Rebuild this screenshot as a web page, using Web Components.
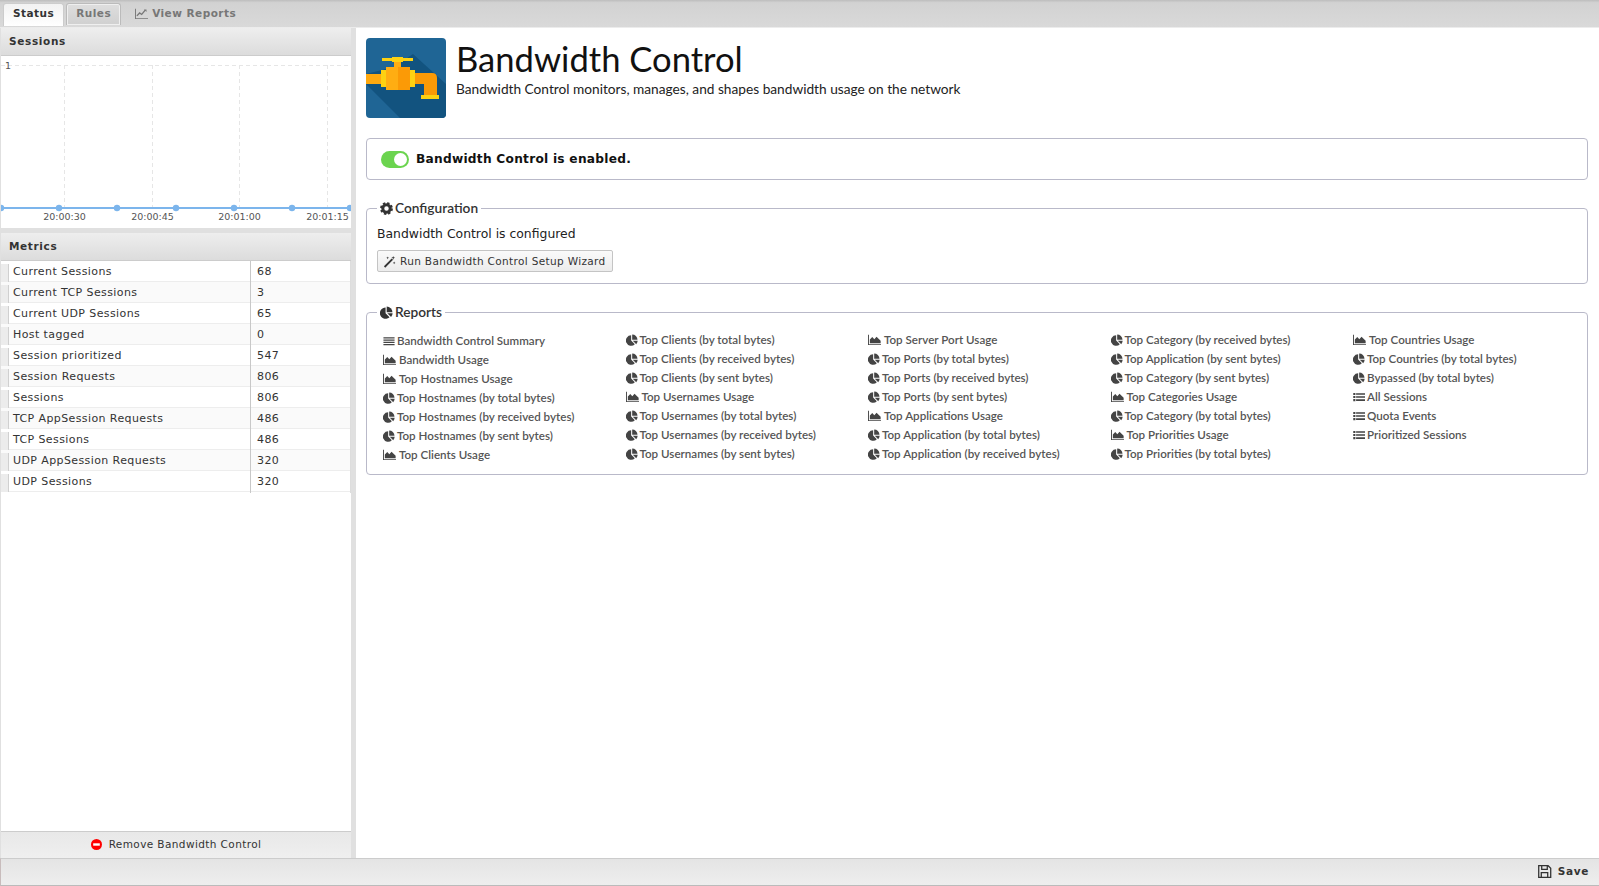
<!DOCTYPE html>
<html>
<head>
<meta charset="utf-8">
<title>Bandwidth Control</title>
<style>
  html, body { margin: 0; height: 100%; overflow: hidden; background: #e0e0e0; }
</style>
</head>
<body>
<bw-app></bw-app>
<script>
const ICONS = {
  pie: '<path d="M6 1.6A6.1 6.1 0 1 0 10.3 12L6 7.7Z"/><path d="M7.2 .6A6.2 6.2 0 0 1 13.4 6.6H7.2Z"/><path d="M7.9 7.9H13.6A6.1 6.1 0 0 1 11.9 11.9Z"/>',
  area: '<path d="M0 2H1V12H14V13H0Z"/><path d="M2 11V7L4.6 4.4 6.8 6.8 9.2 4 13.6 8.4V11Z"/>',
  line: '<path d="M0 2H1V12H14V13H0Z"/><path d="M2 9.6 5 6.4 7.2 8 11 3.4" fill="none" stroke="currentColor" stroke-width="1.4"/><path d="M9.6 2.6H12.4V5.4Z"/>',
  justify: '<path d="M.5 2.5H13.5V4H.5ZM.5 5.2H13.5V6.7H.5ZM.5 7.9H13.5V9.4H.5ZM.5 10.6H13.5V12.1H.5Z" />',
  list: '<path d="M.3 2.2H2.8V4.7H.3ZM3.6 2.5H14V4.4H3.6ZM.3 5.8H2.8V8.3H.3ZM3.6 6.1H14V8H3.6ZM.3 9.4H2.8V11.9H.3ZM3.6 9.7H14V11.6H3.6Z"/>',
  cog: '<circle cx="7" cy="7" r="4" fill="none" stroke="currentColor" stroke-width="3.2"/><circle cx="7" cy="7" r="5.9" fill="none" stroke="currentColor" stroke-width="2" stroke-dasharray="2.6 2.03"/>',
  magic: '<path d="M1 12.2 9.4 3.8 10.8 5.2 2.4 13.6Z"/><path d="M11 1 11.5 2.5 13 3 11.5 3.5 11 5 10.5 3.5 9 3 10.5 2.5ZM5 1.5 5.4 2.6 6.5 3 5.4 3.4 5 4.5 4.6 3.4 3.5 3 4.6 2.6ZM12 7 12.4 8.1 13.5 8.5 12.4 8.9 12 10 11.6 8.9 10.5 8.5 11.6 8.1Z"/>',
  save: '<path fill-rule="evenodd" d="M1 1H10.6L13.4 3.8V13H1ZM2.2 2.2V11.8H3.4V7.4H10.6V11.8H12.2V4.3L10.2 2.3V5.6H3.8V2.2ZM4.6 8.6V11.8H9.4V8.6ZM5 2.2V4.4H9V2.2Z"/>'
};

class BwIcon extends HTMLElement {
  connectedCallback() {
    const size = this.getAttribute('size') || 14;
    this.attachShadow({ mode: 'open' }).innerHTML = `
      <style>
        :host { display: inline-flex; flex: none; }
        svg { display: block; fill: currentColor; }
      </style>
      <svg width="${size}" height="${size}" viewBox="0 0 14 14">${ICONS[this.getAttribute('name')]}</svg>`;
  }
}
customElements.define('bw-icon', BwIcon);

class BwTab extends HTMLElement {
  connectedCallback() {
    this.attachShadow({ mode: 'open' }).innerHTML = `
      <style>
        :host {
          display: flex; align-items: center; gap: 4px; box-sizing: border-box;
          height: 22px; padding: 0 9px 3px; margin-right: 2px; white-space: nowrap;
          font: bold 10.5px "DejaVu Sans", sans-serif; letter-spacing: .47px; color: #777;
          border: 1px solid #bbb; border-bottom: 0; border-radius: 3px 3px 0 0;
          background: linear-gradient(#dedede, #d0d0d0);
          box-shadow: inset 0 0 0 1px #efefef;
        }
        :host([active]) {
          color: #333; background: linear-gradient(#f2f2f2, #fff);
          height: 23px; margin-bottom: -1px; padding-bottom: 4px; box-shadow: none; border-color: #ccc;
        }
        :host([plain]) { border-color: transparent; background: none; box-shadow: none; padding-left: 11px; }
      </style>
      <slot></slot>`;
  }
}
customElements.define('bw-tab', BwTab);

class BwTabbar extends HTMLElement {
  connectedCallback() {
    this.attachShadow({ mode: 'open' }).innerHTML = `
      <style>
        :host {
          display: flex; align-items: flex-end; box-sizing: border-box; height: 28px;
          padding: 3px 0 2px 3px; flex: none;
          background: linear-gradient(#bdbdbd, #d2d2d2 10%, #d9d9d9);
          border-bottom: 1px solid #ececec;
        }
      </style>
      <slot></slot>`;
  }
}
customElements.define('bw-tabbar', BwTabbar);

class BwPanel extends HTMLElement {
  connectedCallback() {
    this.attachShadow({ mode: 'open' }).innerHTML = `
      <style>
        :host { display: block; background: #fff; flex: none; }
        header {
          box-sizing: border-box; height: 28px; padding: 0 8px 2px; display: flex; align-items: center;
          font: bold 10.5px "DejaVu Sans", sans-serif; letter-spacing: .65px; color: #333;
          background: linear-gradient(#eeeeee, #dcdcdc); border-bottom: 1px solid #ccc;
        }
      </style>
      <header>${this.getAttribute('heading')}</header>
      <slot></slot>`;
  }
}
customElements.define('bw-panel', BwPanel);

class BwChart extends HTMLElement {
  connectedCallback() {
    const xs = [63.5, 151.5, 238.5, 326.5];
    const labels = ['20:00:30', '20:00:45', '20:01:00', '20:01:15'];
    const dots = [0, 58, 116, 175, 233, 291, 349];
    this.attachShadow({ mode: 'open' }).innerHTML = `
      <style>
        :host { display: block; height: 172px; }
        svg { display: block; }
        text { font: 9.5px "DejaVu Sans", sans-serif; fill: #555; }
      </style>
      <svg width="350" height="172">
        <path d="M0 9.5H350" stroke="#e6e6e6" stroke-dasharray="4 3"/>
        ${xs.map(x => `<path d="M${x} 9V152" stroke="#e6e6e6" stroke-dasharray="4 3"/>`).join('')}
        <text x="4" y="13">1</text>
        <path d="M0 152H350" stroke="#7cb5ec" stroke-width="2"/>
        ${dots.map(x => `<circle cx="${x}" cy="152" r="3.2" fill="#7cb5ec"/>`).join('')}
        ${labels.map((t, i) => `<text x="${xs[i]}" y="164" text-anchor="middle">${t}</text>`).join('')}
      </svg>`;
  }
}
customElements.define('bw-chart', BwChart);

class BwMetrics extends HTMLElement {
  connectedCallback() {
    const rows = [
      ['Current Sessions', 68], ['Current TCP Sessions', 3], ['Current UDP Sessions', 65],
      ['Host tagged', 0], ['Session prioritized', 547], ['Session Requests', 806],
      ['Sessions', 806], ['TCP AppSession Requests', 486], ['TCP Sessions', 486],
      ['UDP AppSession Requests', 320], ['UDP Sessions', 320]
    ];
    this.attachShadow({ mode: 'open' }).innerHTML = `
      <style>
        :host { display: block; font: 11px "DejaVu Sans", sans-serif; letter-spacing: .4px; color: #333; }
        .row {
          display: grid; grid-template-columns: 8px 242px 1fr; height: 21px; box-sizing: border-box;
          border-bottom: 1px solid #ededed; align-items: stretch;
        }
        .row:nth-of-type(even) { background: #fafafa; }
        .num { background: #ececec; border-right: 1px solid #d0d0d0; margin: 3px 0 1px; }
        .name { padding-left: 4px; line-height: 22px; border-right: 1px solid #c8c8c8; }
        .val { padding-left: 6px; line-height: 22px; border-right: 1px solid #ddd; }
      </style>
      ${rows.map(r => `<div class="row"><div class="num"></div><div class="name">${r[0]}</div><div class="val">${r[1]}</div></div>`).join('')}`;
  }
}
customElements.define('bw-metrics', BwMetrics);

class BwFieldset extends HTMLElement {
  connectedCallback() {
    this.attachShadow({ mode: 'open' }).innerHTML = `
      <style>
        :host { display: block; }
        fieldset {
          margin: 0; padding: 9px 10px 0; border: 1px solid #b9b9c9; border-radius: 4px; min-width: 0;
          box-sizing: border-box; height: var(--h);
        }
        legend {
          display: flex; align-items: center; gap: 2px; padding: 0 3px; margin-left: 0;
          font: 600 13.7px/16px Lato, sans-serif; color: #333; height: 16px;
        }
      </style>
      <fieldset>
        <legend><bw-icon name="${this.getAttribute('icon')}" size="13"></bw-icon>${this.getAttribute('legend')}</legend>
        <slot></slot>
      </fieldset>`;
  }
}
customElements.define('bw-fieldset', BwFieldset);

class BwReport extends HTMLElement {
  connectedCallback() {
    const icon = this.getAttribute('icon');
    const area = icon === 'area';
    this.attachShadow({ mode: 'open' }).innerHTML = `
      <style>
        :host {
          display: flex; align-items: center; height: 19px; white-space: nowrap;
          font: 600 11.6px Lato, sans-serif; color: #555;
        }
        bw-icon { margin-right: ${area ? 3 : 2}px; color: #444; }
      </style>
      <bw-icon name="${icon}" size="${area ? 13 : 12}"></bw-icon><slot></slot>`;
  }
}
customElements.define('bw-report', BwReport);

class BwReports extends HTMLElement {
  connectedCallback() {
    const cols = [
      [['justify', 'Bandwidth Control Summary'], ['area', 'Bandwidth Usage'], ['area', 'Top Hostnames Usage'], ['pie', 'Top Hostnames (by total bytes)'], ['pie', 'Top Hostnames (by received bytes)'], ['pie', 'Top Hostnames (by sent bytes)'], ['area', 'Top Clients Usage']],
      [['pie', 'Top Clients (by total bytes)'], ['pie', 'Top Clients (by received bytes)'], ['pie', 'Top Clients (by sent bytes)'], ['area', 'Top Usernames Usage'], ['pie', 'Top Usernames (by total bytes)'], ['pie', 'Top Usernames (by received bytes)'], ['pie', 'Top Usernames (by sent bytes)']],
      [['area', 'Top Server Port Usage'], ['pie', 'Top Ports (by total bytes)'], ['pie', 'Top Ports (by received bytes)'], ['pie', 'Top Ports (by sent bytes)'], ['area', 'Top Applications Usage'], ['pie', 'Top Application (by total bytes)'], ['pie', 'Top Application (by received bytes)']],
      [['pie', 'Top Category (by received bytes)'], ['pie', 'Top Application (by sent bytes)'], ['pie', 'Top Category (by sent bytes)'], ['area', 'Top Categories Usage'], ['pie', 'Top Category (by total bytes)'], ['area', 'Top Priorities Usage'], ['pie', 'Top Priorities (by total bytes)']],
      [['area', 'Top Countries Usage'], ['pie', 'Top Countries (by total bytes)'], ['pie', 'Bypassed (by total bytes)'], ['list', 'All Sessions'], ['list', 'Quota Events'], ['list', 'Prioritized Sessions']]
    ];
    this.attachShadow({ mode: 'open' }).innerHTML = `
      <style>
        :host { display: grid; grid-template-columns: repeat(5, 242.5px); padding: 1px 0 0 6px; }
        div:first-of-type { padding-top: 1px; }
      </style>
      ${cols.map(c => `<div>${c.map(r => `<bw-report icon="${r[0]}">${r[1]}</bw-report>`).join('')}</div>`).join('')}`;
  }
}
customElements.define('bw-reports', BwReports);

class BwAppIcon extends HTMLElement {
  connectedCallback() {
    this.attachShadow({ mode: 'open' }).innerHTML = `
      <style>
        :host { display: block; width: 80px; height: 80px; flex: none; }
        svg { display: block; border-radius: 4px; }
      </style>
      <svg width="80" height="80" viewBox="0 0 80 80" shape-rendering="crispEdges">
        <rect width="80" height="80" fill="#1f6595"/>
        <path d="M0 46 34 80H80V46L47 16 28 29 0 36Z" fill="#12537f" shape-rendering="auto"/>
        <path d="M0 36H15V46H0Z" fill="#ffa90f"/>
        <path d="M49 35H66Q71 35 71 40V57H58V46H49Z" fill="#fb9a06" shape-rendering="auto"/>
        <path d="M55 57H73V61H55Z" fill="#fdd112"/>
        <path d="M15 32H20V49H15ZM44 32H49V49H44Z" fill="#fdd112"/>
        <path d="M20 29H32V52H20Z" fill="#ffad12"/>
        <path d="M32 29H44V52H32Z" fill="#fb9a06"/>
        <path d="M28 23H35V29H28Z" fill="#ffad12"/>
        <path d="M16 20H47V23H16ZM26 19H37V24H26Z" fill="#fdd112"/>
      </svg>`;
  }
}
customElements.define('bw-app-icon', BwAppIcon);

class BwToggle extends HTMLElement {
  connectedCallback() {
    this.attachShadow({ mode: 'open' }).innerHTML = `
      <style>
        :host { display: block; width: 28px; height: 17px; border-radius: 9px; background: #6bd44f; position: relative; flex: none; }
        i { position: absolute; right: 2px; top: 2px; width: 13px; height: 13px; border-radius: 50%; background: #fff; }
      </style>
      <i></i>`;
  }
}
customElements.define('bw-toggle', BwToggle);

class BwButton extends HTMLElement {
  connectedCallback() {
    this.attachShadow({ mode: 'open' }).innerHTML = `
      <style>
        :host {
          display: inline-flex; align-items: center; gap: 4px; box-sizing: border-box; height: 22px; padding: 0 6px 0 5px;
          border: 1px solid #c4c4c4; border-radius: 2px; background: linear-gradient(#fafafa, #ececec);
          font: 10.5px "DejaVu Sans", sans-serif; letter-spacing: .35px; color: #333; white-space: nowrap;
        }
      </style>
      <slot></slot>`;
  }
}
customElements.define('bw-button', BwButton);

class BwMain extends HTMLElement {
  connectedCallback() {
    this.attachShadow({ mode: 'open' }).innerHTML = `
      <style>
        :host { display: block; flex: 1; min-width: 0; background: #fff; padding: 10px 11px 0 10px; box-sizing: border-box; }
        .head { display: flex; gap: 10px; height: 80px; }
        h1 { margin: 1px 0 0; font: 400 34.6px/40px Lato, sans-serif; color: #111; }
        .sub { font: 13.7px/18px Lato, sans-serif; color: #222; margin-top: 1px; }
        .status {
          display: flex; align-items: center; gap: 7px; height: 42px; box-sizing: border-box; margin: 20px 0 0;
          padding-left: 14px; border: 1px solid #b9b9c9; border-radius: 4px;
          font: bold 12.2px "DejaVu Sans", sans-serif; letter-spacing: .25px; color: #111;
        }
        .cfg { margin-top: 20px; --h: 84px; }
        .rep { margin-top: 20px; --h: 171px; }
        .txt { font: 12.4px/18px "DejaVu Sans", sans-serif; color: #222; margin-bottom: 7px; }
      </style>
      <div class="head">
        <bw-app-icon></bw-app-icon>
        <div>
          <h1>Bandwidth Control</h1>
          <div class="sub">Bandwidth Control monitors, manages, and shapes bandwidth usage on the network</div>
        </div>
      </div>
      <div class="status"><bw-toggle></bw-toggle>Bandwidth Control is enabled.</div>
      <bw-fieldset class="cfg" icon="cog" legend="Configuration">
        <div class="txt">Bandwidth Control is configured</div>
        <bw-button><bw-icon name="magic" size="13"></bw-icon>Run Bandwidth Control Setup Wizard</bw-button>
      </bw-fieldset>
      <bw-fieldset class="rep" icon="pie" legend="Reports">
        <bw-reports></bw-reports>
      </bw-fieldset>`;
  }
}
customElements.define('bw-main', BwMain);

class BwSide extends HTMLElement {
  connectedCallback() {
    this.attachShadow({ mode: 'open' }).innerHTML = `
      <style>
        :host { display: flex; flex-direction: column; width: 350px; flex: none; margin-left: 1px; background: #fff; }
        .gap { height: 5px; background: #e0e0e0; flex: none; }
        .fill { flex: 1; }
        .remove {
          flex: none; height: 27px; box-sizing: border-box; display: flex; align-items: center; justify-content: center; gap: 7px;
          padding-bottom: 2px;
          font: 10.5px "DejaVu Sans", sans-serif; letter-spacing: .4px; color: #333;
          background: linear-gradient(#e8e8e8, #efefef); border-top: 1px solid #ccc;
        }
        svg { display: block; }
      </style>
      <bw-panel heading="Sessions"><bw-chart></bw-chart></bw-panel>
      <div class="gap"></div>
      <bw-panel heading="Metrics"><bw-metrics></bw-metrics></bw-panel>
      <div class="fill"></div>
      <div class="remove">
        <svg width="11" height="11" viewBox="0 0 11 11"><circle cx="5.5" cy="5.5" r="5.5" fill="#f00"/><rect x="2.2" y="4.3" width="6.6" height="2.4" fill="#fff"/></svg>
        Remove Bandwidth Control
      </div>`;
  }
}
customElements.define('bw-side', BwSide);

class BwFooter extends HTMLElement {
  connectedCallback() {
    this.attachShadow({ mode: 'open' }).innerHTML = `
      <style>
        :host {
          display: flex; align-items: center; justify-content: flex-end; gap: 6px; flex: none; height: 28px; box-sizing: border-box;
          padding: 0 10px 2px 0; background: linear-gradient(#e4e4e4, #eeeeee);
          border-top: 1px solid #ccc; border-bottom: 1px solid #bbb; border-left: 1px solid #c8bcbc;
          font: bold 10.5px "DejaVu Sans", sans-serif; letter-spacing: .65px; color: #333;
        }
      </style>
      <bw-icon name="save" size="15"></bw-icon>Save`;
  }
}
customElements.define('bw-footer', BwFooter);

class BwApp extends HTMLElement {
  connectedCallback() {
    this.attachShadow({ mode: 'open' }).innerHTML = `
      <style>
        :host { display: flex; flex-direction: column; height: 100vh; }
        .body { flex: 1; display: flex; gap: 5px; min-height: 0; background: #e0e0e0; }
      </style>
      <bw-tabbar>
        <bw-tab active>Status</bw-tab>
        <bw-tab>Rules</bw-tab>
        <bw-tab plain><bw-icon name="line" size="13"></bw-icon>View Reports</bw-tab>
      </bw-tabbar>
      <div class="body">
        <bw-side></bw-side>
        <bw-main></bw-main>
      </div>
      <bw-footer></bw-footer>`;
  }
}
customElements.define('bw-app', BwApp);
</script>
</body>
</html>
